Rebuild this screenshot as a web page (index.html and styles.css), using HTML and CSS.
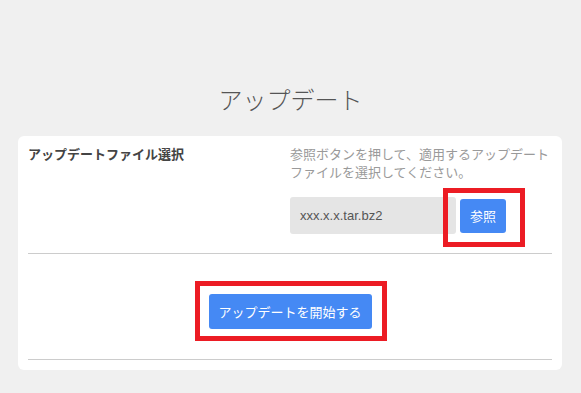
FILE: index.html
```html
<!DOCTYPE html>
<html lang="ja">
<head>
<meta charset="utf-8">
<link rel="stylesheet" href="styles.css">
</head>
<body>
<h1 class="title">アップデート</h1>
<div class="card">
  <div class="row">
    <div class="label">アップデートファイル選択</div>
    <div class="field">
      <p class="desc">参照ボタンを押して、適用するアップデートファイルを選択してください。</p>
      <div class="picker">
        <div class="filename">xxx.x.x.tar.bz2</div>
        <div class="mark mark-browse">
          <button class="btn btn-browse">参照</button>
          <span class="highlight"></span>
        </div>
      </div>
    </div>
  </div>
  <div class="actions">
    <div class="mark mark-start">
      <button class="btn btn-start">アップデートを開始する</button>
      <span class="highlight"></span>
    </div>
  </div>
</div>
</body>
</html>
```
FILE: styles.css
```css
* { box-sizing: border-box; }
html, body { margin: 0; padding: 0; }
body {
  background: #f0f0f0;
  font-family: "Noto Sans CJK JP", "Liberation Sans", sans-serif;
  width: 581px;
  height: 393px;
  overflow: hidden;
}
.title {
  margin: 0;
  padding: 81px 0 19px;
  text-align: center;
  font-size: 24px;
  line-height: 36px;
  font-weight: 300;
  color: #555;
}
.card {
  margin: 0 19px 0 18px;
  background: #fff;
  border-radius: 6px;
  padding: 0 10px 10px;
}
.row {
  display: grid;
  grid-template-columns: 1fr 1fr;
  padding: 9px 0 19px;
  border-bottom: 1px solid #cccccc;
}
.label {
  font-size: 13px;
  line-height: 18px;
  font-weight: 700;
  color: #444;
}
.field { display: flex; flex-direction: column; }
.desc {
  margin: 0;
  font-size: 13px;
  line-height: 18px;
  color: #9a9a9a;
}
.picker {
  display: flex;
  align-items: center;
  gap: 4px;
  margin-top: 16px;
}
.filename {
  width: 166px;
  height: 37px;
  background: #e5e5e5;
  border-radius: 3px;
  padding: 0 10px;
  display: flex;
  align-items: center;
  font-family: "Liberation Sans", "Noto Sans CJK JP", sans-serif;
  font-size: 13px;
  color: #555;
}
.mark { position: relative; display: inline-flex; }
.btn {
  border: none;
  background: #4589f4;
  color: #fff;
  font-family: "Noto Sans CJK JP", "Liberation Sans", sans-serif;
  font-size: 13px;
  border-radius: 3px;
  padding: 0;
  cursor: pointer;
}
.btn-browse { width: 46px; height: 34px; }
.btn-start { width: 163px; height: 35px; }
.highlight {
  position: absolute;
  border: 5px solid #ec1c24;
  pointer-events: none;
}
.mark-browse .highlight { top: -11px; bottom: -14px; left: -17px; right: -19px; }
.mark-start .highlight { top: -13px; bottom: -12px; left: -14px; right: -15px; }
.actions {
  display: flex;
  justify-content: center;
  padding: 40px 0 30px;
  border-bottom: 1px solid #cccccc;
}
```
